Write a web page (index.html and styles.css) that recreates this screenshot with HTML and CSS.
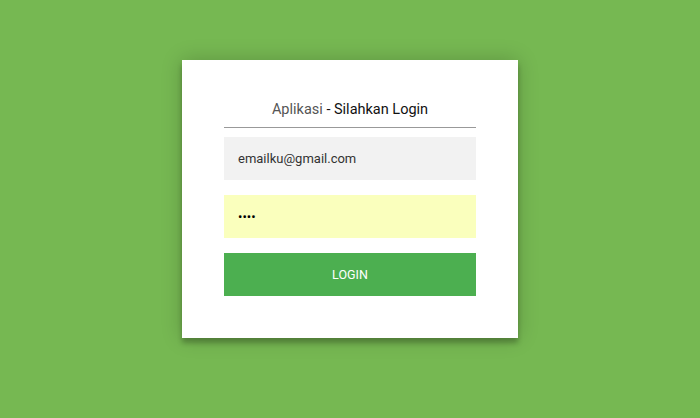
FILE: index.html
```html
<!DOCTYPE html>
<html lang="id">
<head>
<meta charset="utf-8">
<title>Aplikasi - Silahkan Login</title>
<link rel="stylesheet" href="styles.css">
</head>
<body>
<div class="page">
  <form class="card">
    <h2 class="title"><span class="app">Aplikasi</span> - Silahkan Login</h2>
    <input class="field" type="text" value="emailku@gmail.com">
    <input class="field field-autofill" type="password" value="1234">
    <button class="btn" type="button">LOGIN</button>
  </form>
</div>
</body>
</html>
```

FILE: styles.css
```css
html, body {
  margin: 0;
  padding: 0;
  height: 100%;
}
body {
  background: #76b852;
  font-family: Roboto, "Liberation Sans", sans-serif;
}
.page {
  display: flex;
  justify-content: center;
  padding-top: 60px;
}
.card {
  width: 252px;
  padding: 40px 42px 42px;
  background: #fff;
  display: flex;
  flex-direction: column;
  box-shadow: 0 0 20px rgba(0, 0, 0, 0.2), 0 5px 5px rgba(0, 0, 0, 0.24);
}
.title {
  margin: 0 0 9px;
  padding: 0 0 7px;
  font-size: 14.5px;
  line-height: 20px;
  font-weight: 400;
  text-align: center;
  color: #111;
  border-bottom: 1px solid #999;
}
.app {
  color: #555;
}
.field {
  box-sizing: border-box;
  width: 100%;
  height: 43px;
  margin: 0 0 15px;
  padding: 0 14px;
  border: 0;
  outline: 0;
  background: #f2f2f2;
  font-family: Roboto, "Liberation Sans", sans-serif;
  font-size: 13px;
  color: #333;
}
.field-autofill {
  background: #faffbd;
  color: #000;
}
.btn {
  height: 43px;
  width: 100%;
  border: 0;
  padding: 0;
  background: #4caf50;
  color: #fff;
  font-family: Roboto, "Liberation Sans", sans-serif;
  font-size: 12.5px;
  text-transform: uppercase;
  cursor: pointer;
}
```
